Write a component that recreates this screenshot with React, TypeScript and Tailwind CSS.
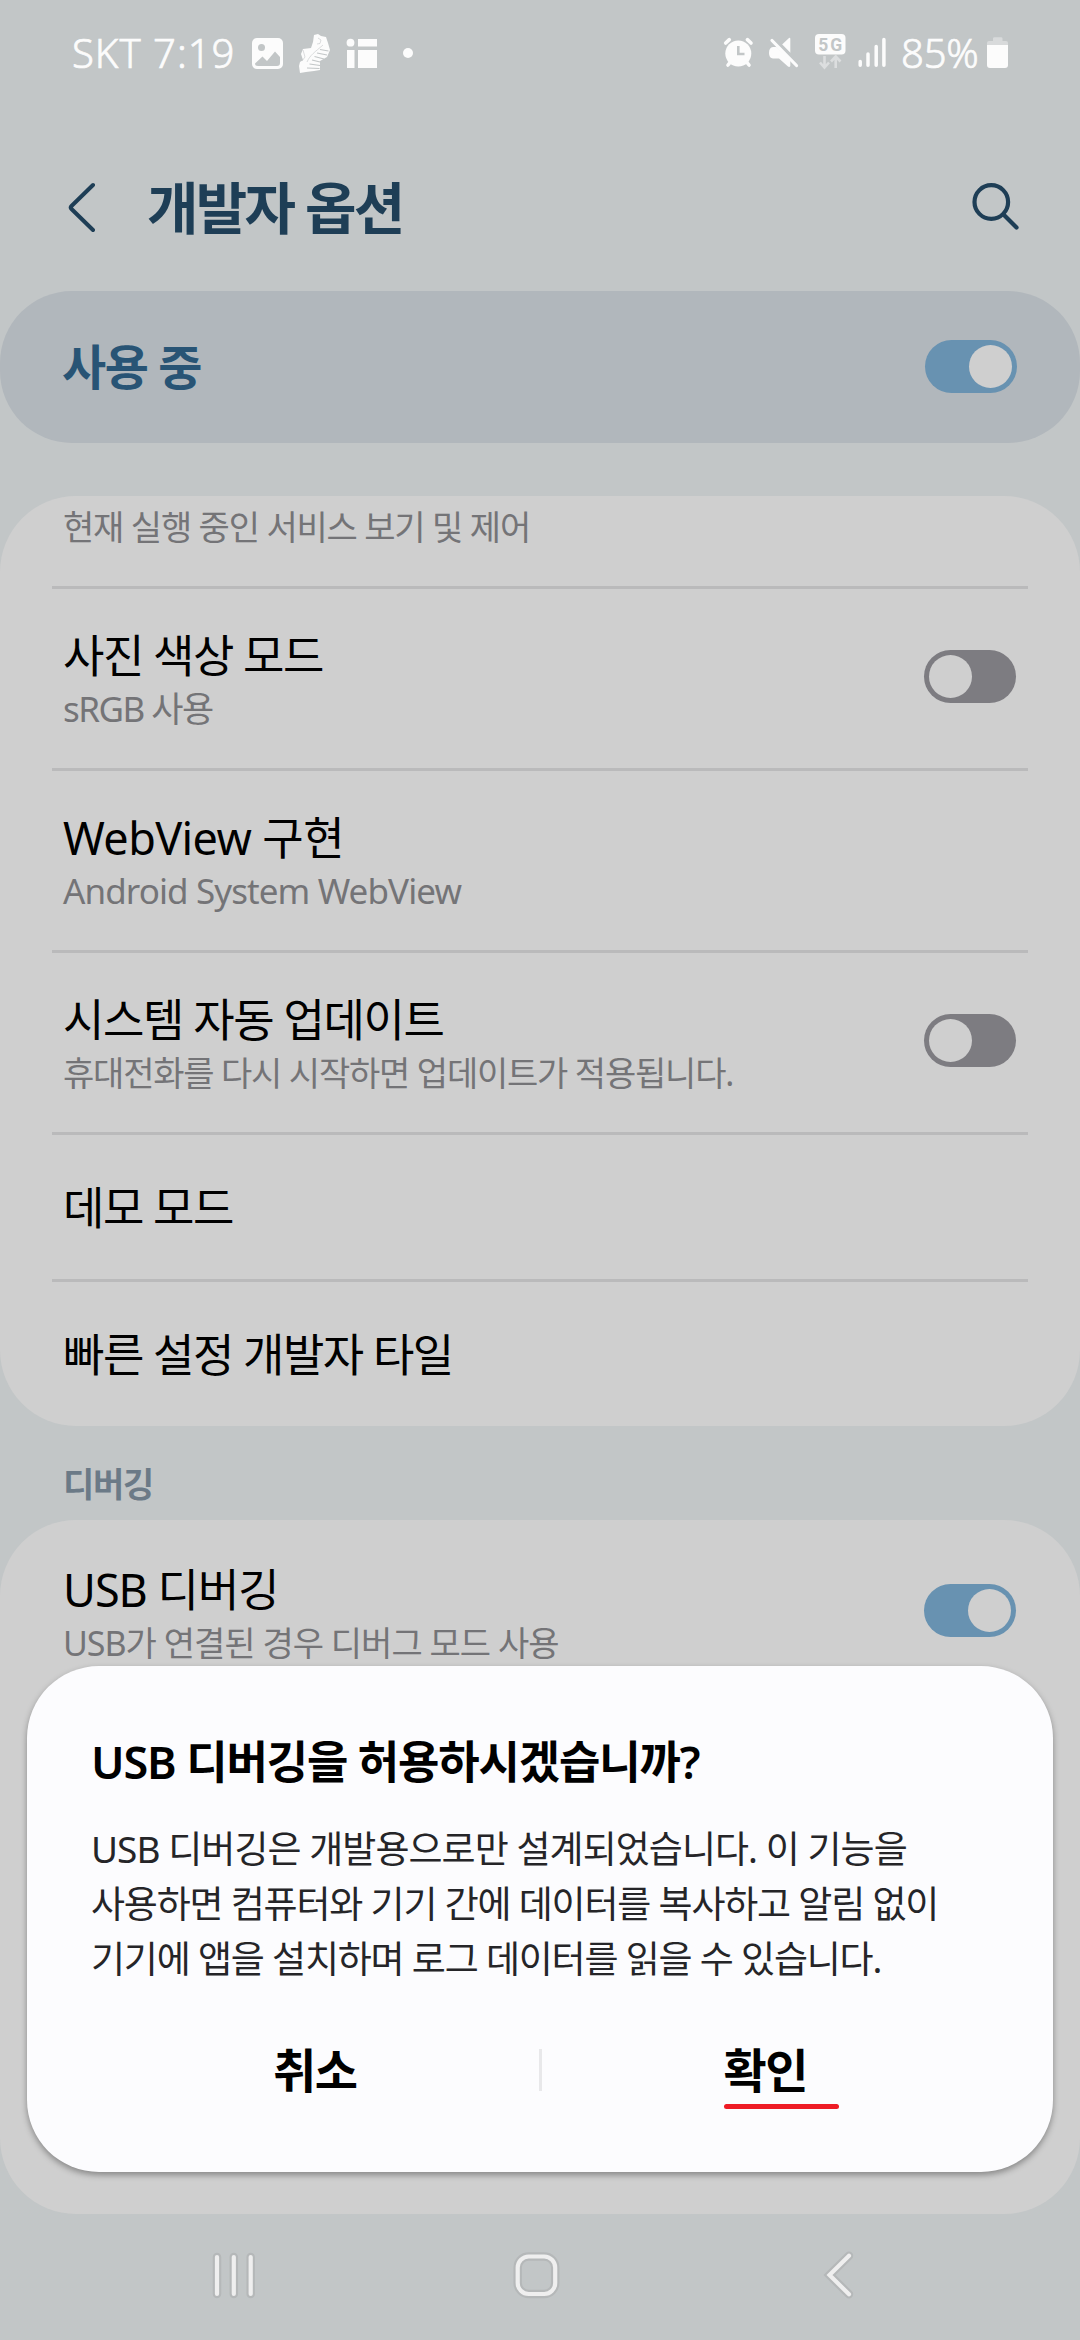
import clsx from "clsx";

type Item = {
  title: string;
  titleClass?: string;
  summary?: string;
  summaryClass?: string;
  checked?: boolean;
};

const ITEMS: Item[] = [
  {
    title: "사진 색상 모드",
    titleClass: "tracking-[-1.5px]",
    summary: "sRGB 사용",
    summaryClass: "text-[35px] tracking-[-1.5px]",
    checked: false,
  },
  {
    title: "WebView 구현",
    titleClass: "tracking-[-0.6px]",
    summary: "Android System WebView",
    summaryClass: "text-[35px] tracking-[-0.9px]",
  },
  {
    title: "시스템 자동 업데이트",
    titleClass: "tracking-[-1.4px]",
    summary: "휴대전화를 다시 시작하면 업데이트가 적용됩니다.",
    summaryClass: "text-[34px] tracking-[-1.2px]",
    checked: false,
  },
  { title: "데모 모드", titleClass: "tracking-[-1.5px]" },
  { title: "빠른 설정 개발자 타일", titleClass: "tracking-[-1.5px]" },
];

function Switch({ checked, className }: { checked: boolean; className?: string }) {
  return (
    <span
      className={clsx(
        "flex h-[53px] w-[92px] shrink-0 items-center rounded-full p-[5px]",
        checked ? "justify-end bg-[#6892b1]" : "justify-start bg-[#7d7c81]",
        className
      )}
    >
      <span className="size-[43px] rounded-full bg-[#cfcfcf]" />
    </span>
  );
}

function Row({ item, divider = true }: { item: Item; divider?: boolean }) {
  return (
    <div
      className={clsx(
        "mx-[52px] flex items-center justify-between border-t-[3px] pr-3 pl-[11px]",
        divider ? "border-[#bababb]" : "border-transparent",
        item.summary ? "h-[182px]" : "h-[147px] pt-[2px]"
      )}
    >
      <div className="whitespace-nowrap">
        <p className={clsx("text-[45px] leading-[60px] text-black", item.titleClass)}>
          {item.title}
        </p>
        {item.summary && (
          <p className={clsx("leading-[46px]! text-[#747477]", item.summaryClass)}>
            {item.summary}
          </p>
        )}
      </div>
      {item.checked !== undefined && (
        <Switch checked={item.checked} className="mb-[4px]" />
      )}
    </div>
  );
}

function StatusBar() {
  return (
    <div className="flex h-[106px] items-center justify-between pr-[71px] pl-[72px] text-[#fcfcfc]">
      <div className="flex items-center">
        <span className="w-[179px] text-[40px] leading-[54px] font-light tracking-[1px] whitespace-nowrap [-webkit-text-stroke:0.7px]">
          SKT 7:19
        </span>
        {/* gallery, shoe and news notification icons */}
        <svg width="164" height="44" viewBox="250 31 164 44" fill="currentColor">
          <rect x="251" y="38" width="31" height="31" rx="5" />
          <circle cx="260.500" cy="47.500" r="3.500" fill="#c2c6c7" />
          <path
            d="M254 63.500 L261.500 56.500 L266 61 L274 51.500 L279 57 V63 Q279 66 276 66 H257 Q254 66 254 63.500Z"
            fill="#c2c6c7"
          />
          <path d="M313 35 L317 34 L320 36 L325 37 L327 43 L329 50 L326 57 L319 61 L319 70 L313 71 L305 72 L299 73 L298 66 L299 62 L302 60 L300 54 L302 49 L310 48 L312 42Z" />
          <g stroke="#c2c6c7" fill="none">
            <path
              d="M317 38 L320 40 L319 43.500 L316 44 M302 50 L304 57 L301 61 M306 62 C309 55 314 52 322 45"
              strokeWidth="0.600"
            />
            <path
              d="M319 49.500 L327.500 51 M316 53 L326 55 M313.500 56.500 L323 59 M311 60 L319 62 M308.500 64 L319 65.500 M306 68 L318.500 68.500"
              strokeWidth="1.100"
            />
          </g>
          <circle cx="349.500" cy="42.700" r="3.900" />
          <rect x="357" y="39" width="19" height="7.500" />
          <rect x="346" y="50" width="7.500" height="18" />
          <rect x="357" y="50" width="19" height="18" />
          <circle cx="407" cy="53" r="5" />
        </svg>
      </div>
      <div className="flex items-center">
        {/* alarm, mute, 5G and signal strength */}
        <svg width="166" height="44" viewBox="722 31 166 44" fill="currentColor">
          <g stroke="currentColor" strokeLinecap="round">
            <path
              d="M725.700 43 L729.300 39.700 M751 43 L747.400 39.700"
              strokeWidth="3.600"
            />
            <path d="M728 65 L732 60 M749 65 L745 60" strokeWidth="3.600" />
          </g>
          <circle cx="738.300" cy="53.500" r="13" />
          <path
            d="M738.300 46 V54 H744.500"
            fill="none"
            stroke="#c2c6c7"
            strokeWidth="2.600"
          />
          <path d="M781 45.500 L789 38 Q790.300 37.200 790.300 39 V53Z" />
          <path d="M773 47 H776.500 L790.300 60 V66 Q789.500 67.500 788 66.500 L779 58.500 H773 Q769 58 769 53 Q769 47.500 773 47Z" />
          <path
            d="M773.500 38.500 L798 63.500"
            stroke="#c2c6c7"
            strokeWidth="4"
          />
          <path
            d="M772 40.500 L796.500 65.500"
            stroke="currentColor"
            strokeWidth="3.200"
            strokeLinecap="round"
          />
          <rect x="815" y="34" width="30.500" height="20.500" rx="4" />
          <text
            x="830.200"
            y="50.700"
            fontSize="17.500"
            fontWeight="700"
            textAnchor="middle"
            textLength="24"
            fill="#c2c6c7"
            className="font-[Roboto]"
          >
            5G
          </text>
          <path
            d="M824.500 56 V67 M820 62.500 L824.500 67.500 L829 62.500 M835.700 68 V57.500 M831 61.500 L835.700 56.500 L840.500 61.500"
            fill="none"
            stroke="#dcdedf"
            strokeWidth="2.600"
          />
          <path
            d="M860.200 61.500 V65.300 M868 54 V65.300 M876.200 46.500 V65.300 M883.900 39.500 V65.300"
            stroke="currentColor"
            strokeWidth="3.500"
            strokeLinecap="round"
          />
        </svg>
        <span className="w-[99px] pl-[13px] text-[40px] leading-[54px] font-light tracking-[-0.2px] whitespace-nowrap [-webkit-text-stroke:0.7px]">
          85%
        </span>
        <svg width="22" height="44" viewBox="987 31 22 44" fill="currentColor">
          <path
            d="M993 38.500 Q993 37.300 994.500 37.300 H1001 Q1002.500 37.300 1002.500 38.500 V41 H1006 Q1008 41 1008 43 V46 H987 V43 Q987 41 989 41 H993Z"
            fill="#d8dadb"
          />
          <path d="M987 45 H1008 V65 Q1008 68 1005 68 H990 Q987 68 987 65Z" />
        </svg>
      </div>
    </div>
  );
}

function NavBar() {
  const shapes = (
    <>
      <path d="M217 2257 V2294 M233.800 2257 V2294 M250.700 2257 V2294" />
      <rect x="517.700" y="2256.500" width="37.500" height="37.500" rx="11" />
      <path d="M849 2255.700 L829.500 2275 L849 2294.300" />
    </>
  );

  return (
    <svg
      width="1080"
      height="126"
      viewBox="0 2214 1080 126"
      fill="none"
      strokeLinecap="round"
    >
      {/* soft grey outline below the light strokes */}
      <g stroke="#b5b8b9" strokeWidth="8.500">
        {shapes}
      </g>
      <g stroke="#efefef" strokeWidth="4.200">
        {shapes}
      </g>
    </svg>
  );
}

function UsbDialog() {
  return (
    <div className="absolute top-[1666px] left-[27px] flex h-[506px] w-[1026px] flex-col rounded-[72px] bg-[#fcfcfe] px-16 pt-[66px] shadow-[0_3px_6px_rgba(0,0,0,0.35)]">
      <h2 className="text-[45px] leading-[60px] font-bold tracking-[-1.15px] whitespace-nowrap text-black">
        <span className="font-semibold">USB</span> 디버깅을 허용하시겠습니까
        <span className="font-semibold">?</span>
      </h2>
      <p className="mt-[29px] text-[37px] leading-[55.2px] tracking-[-1.2px] whitespace-nowrap text-[#252528]">
        <span className="tracking-[-0.95px]">
          USB 디버깅은 개발용으로만 설계되었습니다. 이 기능을
        </span>
        <br />
        사용하면 컴퓨터와 기기 간에 데이터를 복사하고 알림 없이
        <br />
        기기에 앱을 설치하며 로그 데이터를 읽을 수 있습니다.
      </p>
      <div className="mt-[43px] flex items-center text-[47px] leading-[80px] font-bold tracking-[-1.5px] text-black">
        <button className="flex-1">취소</button>
        <span className="h-[42px] w-[3px] bg-[#e8e8ea]" />
        <button className="relative flex-1">
          확인
          <span className="absolute top-[74px] left-[182px] h-[5px] w-[115px] rounded-full bg-[#ee1c25]" />
        </button>
      </div>
    </div>
  );
}

export default function App() {
  return (
    <div className="relative flex h-[2340px] w-[1080px] flex-col overflow-hidden bg-[#c2c6c7] font-['Noto_Sans','Noto_Sans_CJK_KR',sans-serif]">
      <StatusBar />

      <header className="flex h-[185px] items-center pt-[17px] pr-[60px] pl-[68px] text-[#1e3e56]">
        <svg width="28" height="52" viewBox="68 181 28 52" fill="none">
          <path
            d="M93 185 L71.500 206 Q70 207.500 71.500 209 L93 230"
            stroke="currentColor"
            strokeWidth="4"
            strokeLinecap="round"
          />
        </svg>
        <h1 className="ml-[51px] flex-1 text-[56px] leading-[72px] font-bold tracking-[-2.8px]">
          개발자 옵션
        </h1>
        <svg width="50" height="50" viewBox="970 182 50 50" fill="none">
          <g stroke="currentColor" strokeWidth="4.200" strokeLinecap="round">
            <circle cx="991.300" cy="202" r="16.800" />
            <path d="M1004 215 L1016.500 227.500" />
          </g>
        </svg>
      </header>

      <div className="flex h-[152px] items-center justify-between rounded-[72px] bg-[#b1b7bc] pr-[63px] pl-[62px]">
        <span className="text-[48px] leading-[64px] font-bold tracking-[-1.5px] text-[#285475]">
          사용 중
        </span>
        <Switch checked className="mb-px" />
      </div>

      <section className="mt-[53px] h-[930px] rounded-[76px] bg-[#cfcfcf]">
        <p className="h-[90px] pt-[8px] pl-[63px] text-[34px] leading-[46px] tracking-[-1.2px] text-[#747477]">
          현재 실행 중인 서비스 보기 및 제어
        </p>
        {ITEMS.map((item) => (
          <Row key={item.title} item={item} />
        ))}
      </section>

      <h2 className="h-[94px] pt-[35px] pl-[63px] text-[34px] leading-[46px] font-bold tracking-[-1.3px] text-[#6b7a87]">
        디버깅
      </h2>

      <section className="h-[694px] rounded-[76px] bg-[#cfcfcf]">
        <Row
          divider={false}
          item={{
            title: "USB 디버깅",
            titleClass: "tracking-[-1px]",
            summary: "USB가 연결된 경우 디버그 모드 사용",
            summaryClass: "text-[34px] tracking-[-1px]",
            checked: true,
          }}
        />
      </section>

      <NavBar />
      <UsbDialog />
    </div>
  );
}
